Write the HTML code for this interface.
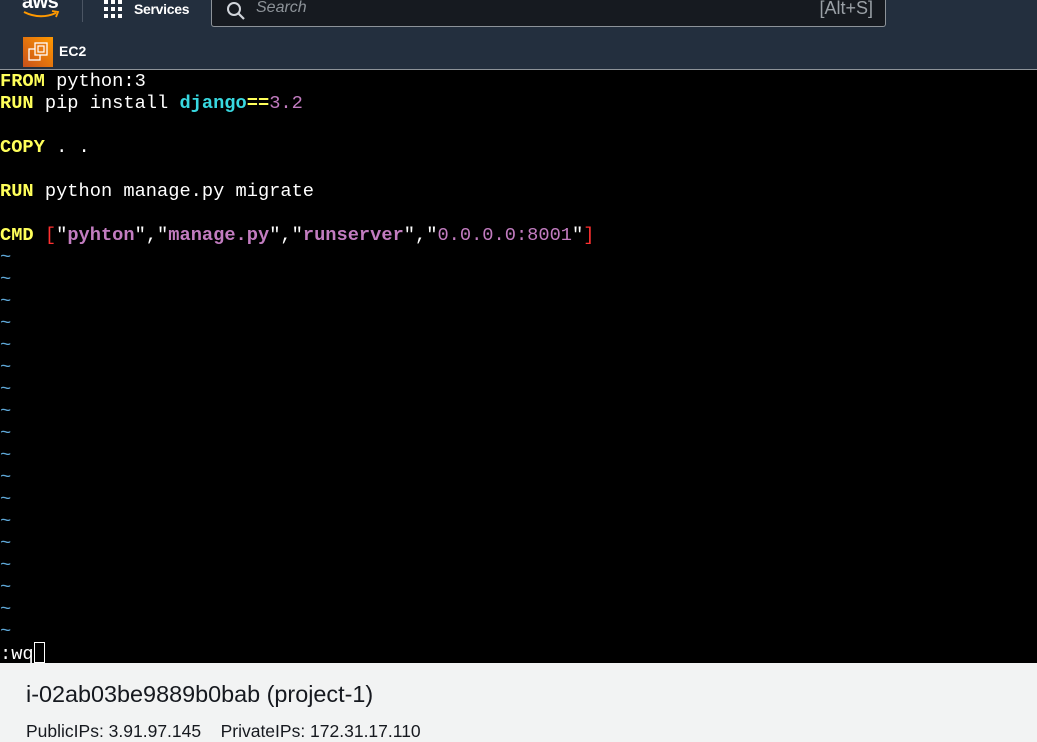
<!DOCTYPE html>
<html><head><meta charset="utf-8"><style>
*{margin:0;padding:0;box-sizing:border-box}
body{width:1037px;height:742px;overflow:hidden;background:#000;font-family:"Liberation Sans",sans-serif;position:relative}
.hdr{position:absolute;left:0;top:0;width:1037px;height:70px;background:#232f3e;border-bottom:1px solid #8d9399}
.aws{position:absolute;left:22px;top:-9px;color:#fff;font-size:20px;font-weight:bold;letter-spacing:-0.5px}
.sep{position:absolute;left:82px;top:0;width:1px;height:22px;background:#4b5563}
.grid{position:absolute;left:104px;top:0}
.svc{position:absolute;left:134px;top:1px;color:#fff;font-size:14px;font-weight:bold;letter-spacing:-0.3px}
.search{position:absolute;left:211px;top:-2px;width:675px;height:29px;background:#161a20;border:1px solid #8d9399;border-top:none;border-radius:0 0 3px 3px}
.search .ph{position:absolute;left:44px;top:1px;color:#8d9399;font-size:16px;font-style:italic}
.search .k{position:absolute;right:12px;top:0px;color:#9aa0a6;font-size:18px}
.ec2{position:absolute;left:23px;top:37px;width:30px;height:30px;background:linear-gradient(45deg,#c8511b,#ff9900)}
.ec2t{position:absolute;left:59px;top:43px;color:#fff;font-size:14px;font-weight:bold}
pre{position:absolute;left:0;top:70px;font-family:"Liberation Mono",monospace;font-size:18.7px;line-height:22px;color:#fff}
.y{color:#ffff5a;font-weight:bold}.c{color:#38d8e0;font-weight:bold}.p{color:#c27cc0;font-weight:bold}.pp{color:#c27cc0}.r{color:#ff3030}.t{color:#5fa8d8}
.cur{display:inline-block;width:11px;height:21px;border:1px solid #fff;vertical-align:-4px}
.bot{position:absolute;left:0;top:663px;width:1037px;height:79px;background:#f2f3f3}
.bot .a{position:absolute;left:26px;top:18px;font-size:23.4px;color:#16191f}
.bot .b{position:absolute;left:26px;top:58px;font-size:17.5px;color:#16191f}
</style></head><body>
<div class="hdr">
<div class="aws">aws</div>
<svg style="position:absolute;left:22px;top:10px" width="40" height="10"><path d="M2 2 Q18 10 34 3" stroke="#ff9900" stroke-width="2" fill="none"/><path d="M30 1 L36 2 L34 7" stroke="#ff9900" stroke-width="1.8" fill="none"/></svg>
<div class="sep"></div>
<svg class="grid" width="20" height="20"><g fill="#fff"><rect x="0" y="0" width="4" height="4"/><rect x="7" y="0" width="4" height="4"/><rect x="14" y="0" width="4" height="4"/><rect x="0" y="7" width="4" height="4"/><rect x="7" y="7" width="4" height="4"/><rect x="14" y="7" width="4" height="4"/><rect x="0" y="14" width="4" height="4"/><rect x="7" y="14" width="4" height="4"/><rect x="14" y="14" width="4" height="4"/></g></svg>
<div class="svc">Services</div>
<div class="search"><svg style="position:absolute;left:14px;top:3px" width="20" height="20"><circle cx="8" cy="8" r="6" stroke="#d1d5db" stroke-width="2" fill="none"/><path d="M12.5 12.5 L18 18" stroke="#d1d5db" stroke-width="2.2"/></svg><span class="ph">Search</span><span class="k">[Alt+S]</span></div>
<div class="ec2"><svg width="30" height="30"><rect x="6" y="12" width="11" height="11" stroke="#fff" stroke-width="1.3" fill="none"/><rect x="12" y="6" width="12" height="12" stroke="#fff" stroke-width="1.3" fill="#e87a12"/><rect x="15" y="9" width="6" height="6" stroke="#fff" stroke-width="1.2" fill="none"/></svg></div>
<div class="ec2t">EC2</div>
</div>
<pre><span class="y">FROM</span> python:3
<span class="y">RUN</span> pip install <span class="c">django</span><span class="y">==</span><span class="pp">3.2</span>

<span class="y">COPY</span> . .

<span class="y">RUN</span> python manage.py migrate

<span class="y">CMD</span> <span class="r">[</span>"<span class="p">pyhton</span>","<span class="p">manage.py</span>","<span class="p">runserver</span>","<span class="pp">0.0.0.0:8001</span>"<span class="r">]</span>
<span class="t">~
~
~
~
~
~
~
~
~
~
~
~
~
~
~
~
~
~</span>
:wq<span class="cur"></span></pre>
<div class="bot"><div class="a">i-02ab03be9889b0bab (project-1)</div><div class="b">PublicIPs: 3.91.97.145&nbsp;&nbsp;&nbsp; PrivateIPs: 172.31.17.110</div></div>
</body></html>
